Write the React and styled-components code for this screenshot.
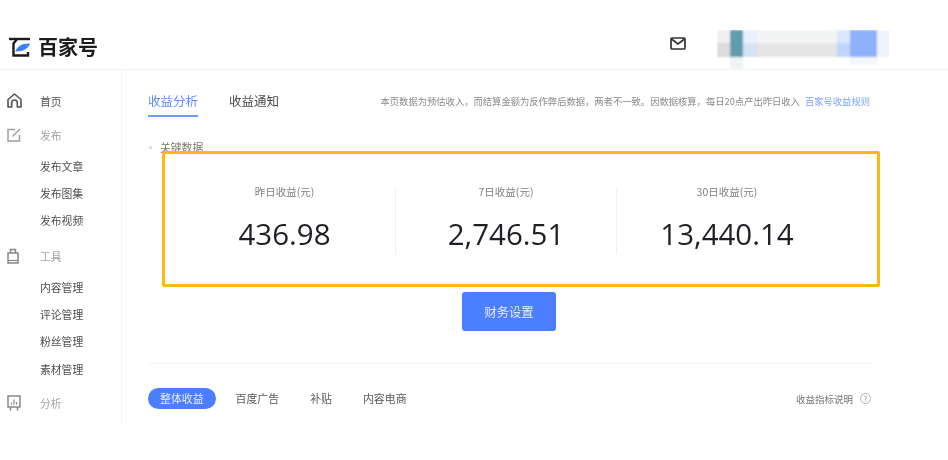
import React from "react";
import styled, { createGlobalStyle } from "styled-components";

const GlobalStyle = createGlobalStyle`
  html, body {
    margin: 0;
    background: #ffffff;
  }
  body {
    font-family: "Noto Sans CJK SC", "Noto Sans", sans-serif;
    color: #4a4a4a;
  }
`;

const menu = [
  { title: "首页", icon: "home", strong: true },
  { title: "发布", icon: "pen", gap: 7, children: ["发布文章", "发布图集", "发布视频"] },
  { title: "工具", icon: "bag", gap: 8, children: ["内容管理", "评论管理", "粉丝管理", "素材管理"] },
  { title: "分析", icon: "chart", gap: 6 },
];

const metrics = [
  { label: "昨日收益(元)", value: "436.98" },
  { label: "7日收益(元)", value: "2,746.51" },
  { label: "30日收益(元)", value: "13,440.14" },
];

const mosaic = [
  [717, 30, 13, 13, "#f0f0f0"],
  [717, 43, 13, 14, "#dcdcdc"],
  [730, 30, 13, 27, "#5f9cad"],
  [730, 57, 13, 12, "#eef3f3"],
  [743, 30, 14, 13, "#e8f1fe"],
  [743, 43, 14, 14, "#d5e3f2"],
  [757, 30, 80, 13, "#f3f4f4"],
  [757, 43, 80, 14, "#e5e5e5"],
  [837, 30, 13, 13, "#dbe7fd"],
  [837, 43, 13, 14, "#c0d5fb"],
  [850, 30, 27, 27, "#8fb0fb"],
  [850, 57, 27, 8, "#f3f7ff"],
  [877, 30, 13, 27, "#eef3fe"],
];

function Logo() {
  return (
    <svg width="21" height="20" viewBox="0 0 21 20">
      <path d="M0 2h21" stroke="#1c1c1e" strokeWidth="2.4" fill="none" />
      <path d="M8 2 4.500 6.500M4.500 6V18.500h14.500V15" stroke="#1c1c1e" strokeWidth="2.4" fill="none" />
      <path d="M6.500 14.500C8 9.500 13 6 21 6.500c-1.500 4.500-6 8-14.500 8z" fill="#3f7ef5" />
    </svg>
  );
}

function HomeIcon() {
  return (
    <svg width="15" height="15" viewBox="0 0 15 15" fill="none" stroke="#555" strokeWidth="1.600" strokeLinejoin="round">
      <path d="M1 6.500 7.500 1 14 6.500V14h-3.700V9.800a2.800 2.800 0 0 0-5.600 0V14H1z" />
    </svg>
  );
}

function PenIcon() {
  return (
    <svg width="14" height="14" viewBox="0 0 14 14" fill="none" stroke="#a0a0a0" strokeWidth="1.500">
      <path d="M8 1.500H1V13h11.500V7" />
      <path d="M5.500 8.500 13 1" />
    </svg>
  );
}

function BagIcon() {
  return (
    <svg width="12" height="16" viewBox="0 0 12 16" fill="none" stroke="#888" strokeWidth="1.500">
      <path d="M1 5h10v10H1z" />
      <path d="M3.500 5V1.500h5V5" />
      <path d="M1 12.500h10" strokeWidth="1.200" />
    </svg>
  );
}

function ChartIcon() {
  return (
    <svg width="14" height="16" viewBox="0 0 14 16" fill="none" stroke="#888" strokeWidth="1.500">
      <path d="M1 1h12v11H1z" />
      <path d="M3.500 12v3.500M10.500 12v3.500" />
      <path d="M4.500 9.500V7.500M7 9.500V4.500M9.500 9.500V7" strokeWidth="1.200" />
    </svg>
  );
}

function MailIcon() {
  return (
    <svg width="16" height="13" viewBox="0 0 16 13" fill="none" stroke="#333" strokeWidth="1.700">
      <rect x="1" y="1" width="14" height="11" rx="1" />
      <path d="M1.500 2 8 7l6.500-5" />
    </svg>
  );
}

function NavIcon({ name }) {
  if (name === "home") return <HomeIcon />;
  if (name === "pen") return <PenIcon />;
  if (name === "bag") return <BagIcon />;
  return <ChartIcon />;
}

export default function App() {
  return (
    <Page>
      <GlobalStyle />
      <Header>
        <Brand>
          <Logo />
          <BrandName>百家号</BrandName>
        </Brand>
        <HeaderRight>
          <MailIcon />
          <NameMosaic width="173" height="40" viewBox="717 30 173 40">
            <defs>
              <filter id="soft">
                <feGaussianBlur stdDeviation="0.8" />
              </filter>
            </defs>
            <g filter="url(#soft)">
              {mosaic.map(([x, y, w, h, fill]) => (
                <rect key={`${x}-${y}`} x={x} y={y} width={w} height={h} fill={fill} />
              ))}
            </g>
          </NameMosaic>
        </HeaderRight>
      </Header>
      <Body>
        <Sidebar>
          {menu.map((item) => (
            <NavGroup key={item.title} $gap={item.gap}>
              <NavHead $strong={item.strong}>
                <IconSlot>
                  <NavIcon name={item.icon} />
                </IconSlot>
                {item.title}
              </NavHead>
              {item.children && (
                <SubList>
                  {item.children.map((child) => (
                    <SubItem key={child}>{child}</SubItem>
                  ))}
                </SubList>
              )}
            </NavGroup>
          ))}
        </Sidebar>
        <Main>
          <TabBar>
            <Tab $active>收益分析</Tab>
            <Tab>收益通知</Tab>
            <Notice>
              本页数据为预估收入，而结算金额为反作弊后数据，两者不一致。因数据核算，每日20点产出昨日收入
              <NoticeLink>百家号收益规则</NoticeLink>
            </Notice>
          </TabBar>
          <SectionLabel>关键数据</SectionLabel>
          <MetricBox>
            {metrics.map((m) => (
              <Metric key={m.label}>
                <MetricLabel>{m.label}</MetricLabel>
                <MetricValue>{m.value}</MetricValue>
              </Metric>
            ))}
          </MetricBox>
          <SettingsButton type="button">财务设置</SettingsButton>
          <Divider />
          <FilterRow>
            <Pill $active>整体收益</Pill>
            <Pill>百度广告</Pill>
            <Pill>补贴</Pill>
            <Pill>内容电商</Pill>
            <Explain>
              收益指标说明
              <HelpDot>?</HelpDot>
            </Explain>
          </FilterRow>
        </Main>
      </Body>
    </Page>
  );
}

const Page = styled.div`
  width: 948px;
  height: 460px;
  overflow: hidden;
  background: #ffffff;
  filter: blur(0.35px);
`;

const Header = styled.header`
  box-sizing: border-box;
  height: 70px;
  padding: 18px 58px 0 9px;
  display: flex;
  align-items: center;
  justify-content: space-between;
  border-bottom: 1px solid #f1f2f4;
`;

const Brand = styled.div`
  display: flex;
  align-items: center;
  gap: 8px;
  margin-top: 6px;
`;

const BrandName = styled.span`
  font-size: 20px;
  font-weight: 700;
  line-height: 20px;
  color: #1c1c1e;
`;

const HeaderRight = styled.div`
  display: flex;
  align-items: center;
  gap: 31px;
`;

const NameMosaic = styled.svg`
  display: block;
  margin-top: 12px;
`;

const Body = styled.div`
  display: flex;
`;

const Sidebar = styled.aside`
  box-sizing: border-box;
  width: 122px;
  height: 355px;
  padding: 17px 0 0 7px;
  border-right: 1px solid #f3f4f6;
  flex-shrink: 0;
`;

const NavGroup = styled.div`
  margin-top: ${(p) => p.$gap || 0}px;
`;

const NavHead = styled.div`
  height: 27px;
  display: flex;
  align-items: center;
  font-size: 10.800px;
  color: ${(p) => (p.$strong ? "#555555" : "#a3a3a3")};
`;

const IconSlot = styled.span`
  width: 33px;
  display: flex;
  align-items: center;
`;

const SubList = styled.div`
  margin-top: 4.500px;
`;

const SubItem = styled.div`
  height: 27.300px;
  line-height: 27.300px;
  padding-left: 33px;
  font-size: 10.800px;
  color: #4f4f4f;
`;

const Main = styled.main`
  box-sizing: border-box;
  width: 826px;
  padding: 18px 76px 0 26px;
  display: flex;
  flex-direction: column;
`;

const TabBar = styled.div`
  height: 29px;
  display: flex;
  align-items: flex-start;
  gap: 31px;
`;

const Tab = styled.div`
  height: 27px;
  line-height: 25px;
  font-size: 12.500px;
  color: ${(p) => (p.$active ? "#5f8ff5" : "#4a4a4a")};
  border-bottom: 2px solid ${(p) => (p.$active ? "#6f9cf7" : "transparent")};
`;

const Notice = styled.div`
  margin-left: auto;
  margin-right: 2px;
  line-height: 27px;
  font-size: 9.300px;
  color: #8a8a8a;
  white-space: nowrap;
`;

const NoticeLink = styled.span`
  margin-left: 5px;
  color: #7ea6f5;
`;

const SectionLabel = styled.div`
  margin-top: 23px;
  height: 14px;
  line-height: 14px;
  padding-left: 12px;
  font-size: 10.800px;
  color: #777777;
  position: relative;

  &::before {
    content: "";
    position: absolute;
    left: 1px;
    top: 6px;
    width: 3px;
    height: 3px;
    border-radius: 50%;
    background: #d5d5d5;
  }
`;

const MetricBox = styled.section`
  box-sizing: border-box;
  height: 136px;
  margin: -3px -8px 0 14px;
  padding: 33px 40px 31px 9px;
  display: grid;
  grid-template-columns: repeat(3, 221px);
  border: 3px solid #fdb913;
  border-radius: 2px;
  background: #ffffff;
  position: relative;
`;

const Metric = styled.div`
  display: flex;
  flex-direction: column;
  align-items: center;

  & + & {
    border-left: 1px solid #f0f1f3;
  }
`;

const MetricLabel = styled.div`
  font-size: 10.500px;
  line-height: 16px;
  margin-top: -3px;
  color: #808080;
`;

const MetricValue = styled.div`
  margin-top: 14px;
  font-family: "Open Sans", "Noto Sans", sans-serif;
  font-size: 29.500px;
  line-height: 40px;
  color: #1f2025;
`;

const SettingsButton = styled.button`
  align-self: center;
  width: 94px;
  height: 39px;
  margin: 5px 2px 0 0;
  border: none;
  border-radius: 3px;
  background: #4c7fff;
  color: #e9efff;
  font-family: inherit;
  font-size: 12.300px;
`;

const Divider = styled.div`
  height: 1px;
  margin-top: 32px;
  background: #f3f4f6;
`;

const FilterRow = styled.div`
  margin-top: 24px;
  display: flex;
  align-items: center;
`;

const Pill = styled.div`
  height: 21px;
  line-height: 21px;
  padding: 0 ${(p) => (p.$active ? "12px" : "0")};
  margin-right: ${(p) => (p.$active ? "20px" : "31px")};
  border-radius: 11px;
  font-size: 10.900px;
  color: ${(p) => (p.$active ? "#e4ebff" : "#5a5a5a")};
  background: ${(p) => (p.$active ? "#4c7fff" : "transparent")};
`;

const Explain = styled.div`
  margin: 0 1px 0 auto;
  display: flex;
  align-items: center;
  gap: 7px;
  font-size: 9.500px;
  color: #767676;
`;

const HelpDot = styled.span`
  box-sizing: border-box;
  width: 11px;
  height: 11px;
  border: 1px solid #b5b5b5;
  border-radius: 50%;
  text-align: center;
  line-height: 9px;
  font-size: 8px;
  color: #999999;
`;
